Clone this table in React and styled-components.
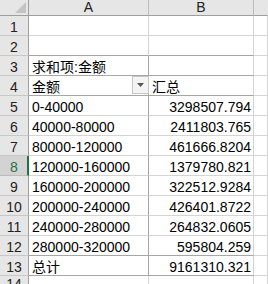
import React from 'react'
import styled, { createGlobalStyle } from 'styled-components'

const GRID = '#d4d4d4'
const HEAD_LINE = '#9e9e9e'
const PIVOT_LINE = '#a6a6a6'
const ACCENT = '#217346'

const GlobalStyle = createGlobalStyle`
  html, body {
    margin: 0;
    padding: 0;
    background: #ffffff;
  }
  body {
    font-family: 'Liberation Sans', 'Noto Sans CJK SC', Arial, sans-serif;
    font-size: 14px;
    color: #000000;
  }
`

const Sheet = styled.div`
  display: grid;
  grid-template-columns: 29px 120px 105px 1fr;
  grid-template-rows: 16px repeat(13, 20px) 1fr;
  width: 268px;
  height: 284px;
  overflow: hidden;
  background: #ffffff;
`

const Corner = styled.div`
  box-sizing: border-box;
  background: #e6e6e6;
  border-right: 1px solid ${HEAD_LINE};
  border-bottom: 1px solid ${HEAD_LINE};
  display: flex;
  justify-content: flex-end;
  align-items: flex-end;
  padding: 0 2px 2px 0;
`

const ColHead = styled.div`
  box-sizing: border-box;
  background: #e6e6e6;
  border-right: 1px solid ${(p) => (p.$last ? 'transparent' : '#bcbcbc')};
  border-bottom: 1px solid ${HEAD_LINE};
  display: flex;
  align-items: flex-end;
  justify-content: center;
  line-height: 14px;
  padding-bottom: 1px;
  color: #222222;
`

const RowHead = styled.div`
  box-sizing: border-box;
  background: ${(p) => (p.$active ? '#d3d3d3' : '#e6e6e6')};
  color: ${(p) => (p.$active ? ACCENT : '#222222')};
  border-bottom: 1px solid ${(p) => (p.$active ? '#bcbcbc' : '#c8c8c8')};
  border-right: ${(p) => (p.$active ? `2px solid ${ACCENT}` : `1px solid ${HEAD_LINE}`)};
  display: flex;
  align-items: flex-end;
  justify-content: center;
  line-height: 16px;
  padding-left: ${(p) => (p.$active ? '1px' : '0')};
`

const Cell = styled.div`
  box-sizing: border-box;
  position: relative;
  border-right: 1px solid ${(p) => p.$right || GRID};
  border-bottom: 1px solid ${(p) => p.$bottom || GRID};
  display: flex;
  align-items: flex-end;
  justify-content: ${(p) => (p.$num ? 'flex-end' : 'flex-start')};
  padding: 0 ${(p) => (p.$num ? '2px' : '0')} 0 3px;
  line-height: 16px;
  white-space: nowrap;
  overflow: visible;
`

const FilterButton = styled.div`
  box-sizing: border-box;
  align-self: flex-start;
  margin-left: auto;
  margin-right: -1px;
  width: 17px;
  height: 18px;
  background: #f4f4f4;
  border: 1px solid #c6c6c6;
  display: flex;
  align-items: center;
  justify-content: center;
`

const CornerMark = () => (
  <svg width="11" height="11" viewBox="0 0 11 11">
    <polygon points="11,0 11,11 0,11" fill="#c4c4c4" />
  </svg>
)

const DropArrow = () => (
  <svg width="7" height="4" viewBox="0 0 7 4">
    <polygon points="0,0 7,0 3.5,4" fill="#555555" />
  </svg>
)

// pivot body: [label, value]
const rows = [
  ['', ''],
  ['', ''],
  ['求和项:金额', ''],
  ['金额', '汇总'],
  ['0-40000', '3298507.794'],
  ['40000-80000', '2411803.765'],
  ['80000-120000', '461666.8204'],
  ['120000-160000', '1379780.821'],
  ['160000-200000', '322512.9284'],
  ['200000-240000', '426401.8722'],
  ['240000-280000', '264832.0605'],
  ['280000-320000', '595804.259'],
  ['总计', '9161310.321'],
]

// rows whose bottom edge is part of the pivot outline
const strongBottom = [2, 3, 4, 12, 13]

export default function App() {
  return (
    <>
      <GlobalStyle />
      <Sheet>
        <Corner>
          <CornerMark />
        </Corner>
        <ColHead>A</ColHead>
        <ColHead>B</ColHead>
        <ColHead $last />

        {rows.map(([label, value], i) => {
          const n = i + 1
          const inPivot = n >= 3
          const bottom = strongBottom.includes(n) ? PIVOT_LINE : GRID
          return (
            <React.Fragment key={n}>
              <RowHead $active={n === 8}>{n}</RowHead>
              <Cell $bottom={bottom} $right={inPivot ? PIVOT_LINE : GRID}>
                {label}
                {n === 4 && (
                  <FilterButton>
                    <DropArrow />
                  </FilterButton>
                )}
              </Cell>
              <Cell $num={n >= 5} $bottom={bottom}>
                {value}
              </Cell>
              <Cell />
            </React.Fragment>
          )
        })}

        <RowHead>14</RowHead>
        <Cell />
        <Cell />
        <Cell />
      </Sheet>
    </>
  )
}
